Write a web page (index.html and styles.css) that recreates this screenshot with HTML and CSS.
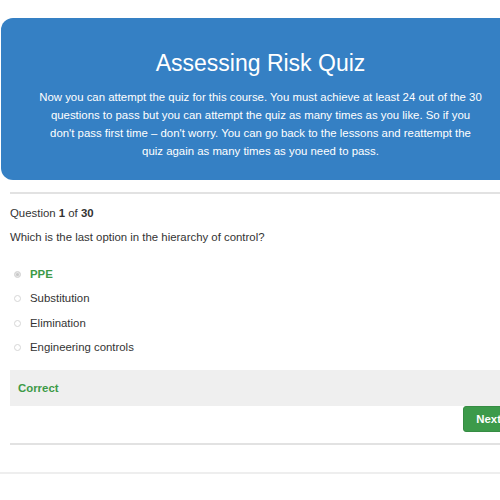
FILE: index.html
```html
<!DOCTYPE html>
<html>
<head>
  <title>Assessing Risk Quiz</title>
  <link rel="stylesheet" href="styles.css">
</head>
<body>
<div class="page">
  <div class="intro">
    <h1>Assessing Risk Quiz</h1>
    <p>Now you can attempt the quiz for this course. You must achieve at least 24 out of the 30<br>
    questions to pass but you can attempt the quiz as many times as you like. So if you<br>
    don't pass first time &ndash; don't worry. You can go back to the lessons and reattempt the<br>
    quiz again as many times as you need to pass.</p>
  </div>

  <div class="quiz">
    <hr class="rule">
    <div class="meta">Question <b>1</b> of <b>30</b></div>
    <div class="question">Which is the last option in the hierarchy of control?</div>

    <ul class="options">
      <li class="option correct"><span class="radio checked"></span>PPE</li>
      <li class="option"><span class="radio"></span>Substitution</li>
      <li class="option"><span class="radio"></span>Elimination</li>
      <li class="option"><span class="radio"></span>Engineering controls</li>
    </ul>

    <div class="result">Correct</div>
    <div class="actions">
      <button class="next">Next</button>
    </div>
    <hr class="rule">
  </div>

  <div class="footer"></div>
</div>
</body>
</html>
```

FILE: styles.css
```css
/* quiz page */
body {
  margin: 0;
  font-family: "Liberation Sans", Arial, sans-serif;
  font-size: 11.4px;
  color: #333;
  background: #fff;
  overflow: hidden;
}

.intro {
  margin: 18px 0 0 1px;
  width: 519px;
  box-sizing: border-box;
  padding: 31px 20px 20px;
  background-color: #3580c4;
  border-radius: 12px;
  color: #fff;
  text-align: center;
}

.intro h1 {
  margin: 0;
  font-size: 23px;
  font-weight: normal;
  line-height: 28px;
}

.intro p {
  margin: 11px 0 0;
  line-height: 18px;
}

.quiz {
  margin-left: 10px;
  width: 504px;
}

.rule {
  margin: 0;
  border: none;
  height: 2px;
  background-color: #e2e2e2;
}

.quiz > .rule:first-child {
  margin-top: 12px;
}

.meta {
  margin-top: 10px;
  line-height: 18px;
}

.question {
  margin-top: 6px;
  line-height: 18px;
}

.options {
  list-style: none;
  margin: 16px 0 0;
  padding: 0;
}

.option {
  display: flex;
  align-items: center;
  line-height: 24.4px;
}

.option.correct {
  color: #3d9a47;
  font-weight: bold;
}

.radio {
  width: 5px;
  height: 5px;
  margin: 0 9px 0 4px;
  border: 1px solid #d6d6d6;
  border-radius: 50%;
  background-color: #fff;
}

.radio.checked {
  border-color: #d8d8d8;
  background-color: #c8c8c8;
  box-shadow: inset 0 0 0 1px #e8e8e8;
}

.result {
  margin-top: 10px;
  padding: 0 8px;
  line-height: 36px;
  background-color: #efefef;
  color: #3d9a47;
  font-weight: bold;
}

.actions {
  display: flex;
  justify-content: flex-end;
  margin-bottom: 11px;
}

.next {
  height: 26px;
  padding: 0 12px;
  background-color: #3c9a4a;
  border: 1px solid #368c43;
  border-radius: 3px;
  color: #fff;
  font-family: inherit;
  font-size: 11.4px;
  font-weight: bold;
}

.footer {
  margin-top: 27px;
  height: 2px;
  background-color: #eee;
}
```
